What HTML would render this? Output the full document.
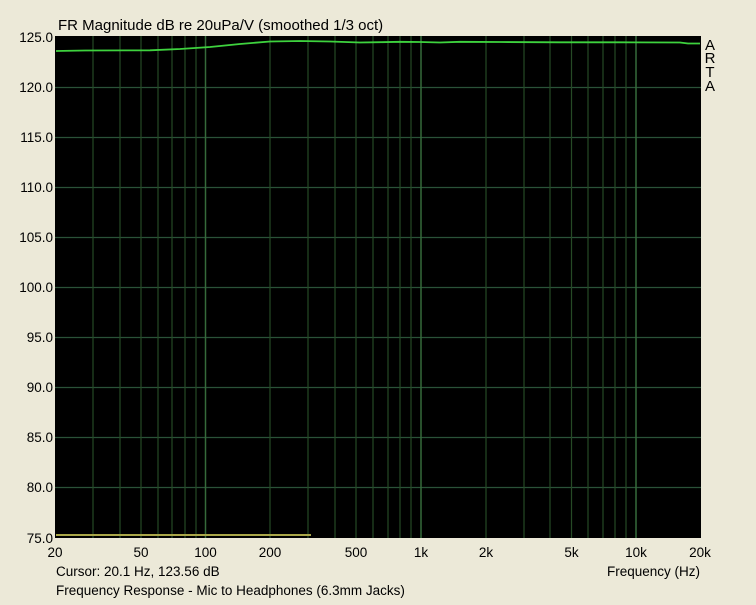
<!DOCTYPE html>
<html><head><style>
body{margin:0;background:#ece9d8;width:756px;height:600px;overflow:hidden;font-family:"Liberation Sans",Arial,sans-serif;}
</style></head><body>
<svg width="756" height="600" xmlns="http://www.w3.org/2000/svg" font-family="Liberation Sans, Arial, sans-serif" font-size="13" fill="#000">
<rect width="756" height="600" fill="#ece9d8"/>
<rect x="55" y="36" width="646" height="502" fill="#000"/>
<g stroke="#2a5238" stroke-width="1.2">
<line x1="55" y1="87.5" x2="701" y2="87.5"/><line x1="55" y1="137.5" x2="701" y2="137.5"/>
<line x1="55" y1="187.5" x2="701" y2="187.5"/><line x1="55" y1="237.5" x2="701" y2="237.5"/>
<line x1="55" y1="287.5" x2="701" y2="287.5"/><line x1="55" y1="337.5" x2="701" y2="337.5"/>
<line x1="55" y1="387.5" x2="701" y2="387.5"/><line x1="55" y1="437.5" x2="701" y2="437.5"/>
<line x1="55" y1="487.5" x2="701" y2="487.5"/>
</g>
<g stroke="#264a26" stroke-width="1.2">
<line x1="93" y1="36" x2="93" y2="538"/><line x1="120" y1="36" x2="120" y2="538"/><line x1="141" y1="36" x2="141" y2="538"/><line x1="158" y1="36" x2="158" y2="538"/><line x1="172" y1="36" x2="172" y2="538"/><line x1="185" y1="36" x2="185" y2="538"/><line x1="196" y1="36" x2="196" y2="538"/>
<line x1="270" y1="36" x2="270" y2="538"/><line x1="308" y1="36" x2="308" y2="538"/><line x1="335" y1="36" x2="335" y2="538"/><line x1="356" y1="36" x2="356" y2="538"/><line x1="373" y1="36" x2="373" y2="538"/><line x1="388" y1="36" x2="388" y2="538"/><line x1="400" y1="36" x2="400" y2="538"/><line x1="411" y1="36" x2="411" y2="538"/>
<line x1="486" y1="36" x2="486" y2="538"/><line x1="524" y1="36" x2="524" y2="538"/><line x1="550" y1="36" x2="550" y2="538"/><line x1="571.5" y1="36" x2="571.5" y2="538"/><line x1="588" y1="36" x2="588" y2="538"/><line x1="603" y1="36" x2="603" y2="538"/><line x1="615" y1="36" x2="615" y2="538"/><line x1="626" y1="36" x2="626" y2="538"/>
</g>
<g stroke="#356a3a" stroke-width="1.5">
<line x1="205.5" y1="36" x2="205.5" y2="538"/><line x1="421" y1="36" x2="421" y2="538"/><line x1="636" y1="36" x2="636" y2="538"/>
</g>
<line x1="56" y1="535" x2="311" y2="535" stroke="#a9a648" stroke-width="2"/>
<polyline fill="none" stroke="#3ed23e" stroke-width="1.8" points="56,51 85,50.5 150,50.3 180,49 210,47 240,44 270,41.5 300,41 330,41.5 360,42.5 380,42.2 400,41.8 420,42 440,42.5 460,41.8 500,42 560,42.3 620,42.3 680,42.5 688,43.5 700,43.5"/>
<text x="58" y="30" font-size="15">FR Magnitude dB re 20uPa/V (smoothed 1/3 oct)</text>
<g text-anchor="end" font-size="13.5">
<text x="53" y="42">125.0</text><text x="53" y="92">120.0</text><text x="53" y="142">115.0</text><text x="53" y="192">110.0</text><text x="53" y="242">105.0</text><text x="53" y="292">100.0</text><text x="53" y="342">95.0</text><text x="53" y="392">90.0</text><text x="53" y="442">85.0</text><text x="53" y="492">80.0</text><text x="53" y="543">75.0</text>
</g>
<g text-anchor="middle" font-size="13.5">
<text x="55" y="557">20</text><text x="141" y="557">50</text><text x="205.5" y="557">100</text><text x="270" y="557">200</text><text x="356" y="557">500</text><text x="421" y="557">1k</text><text x="486" y="557">2k</text><text x="571.5" y="557">5k</text><text x="636" y="557">10k</text><text x="700" y="557">20k</text>
</g>
<g text-anchor="middle" font-size="15">
<text x="710" y="50">A</text><text x="710" y="63">R</text><text x="710" y="77">T</text><text x="710" y="91">A</text>
</g>
<text x="56" y="576" font-size="13.5">Cursor: 20.1 Hz, 123.56 dB</text>
<text x="56" y="595" font-size="13.5">Frequency Response - Mic to Headphones (6.3mm Jacks)</text>
<text x="700" y="576" text-anchor="end" font-size="13.5">Frequency (Hz)</text>
</svg>
</body></html>
